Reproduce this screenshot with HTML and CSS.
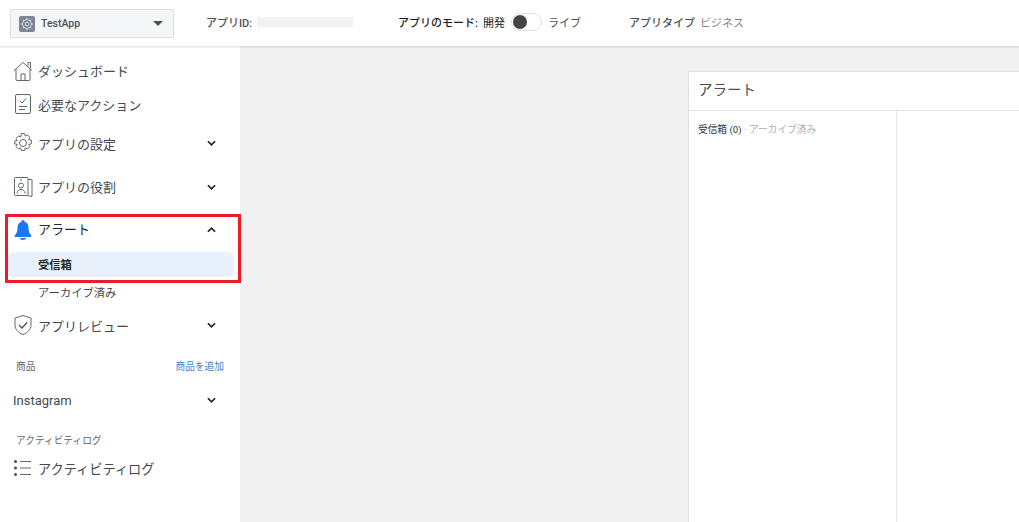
FILE: index.html
```html
<!DOCTYPE html>
<html lang="ja">
<head>
  <meta charset="UTF-8">
  <title>TestApp</title>
  <link rel="stylesheet" href="styles.css">
</head>
<body>
  <!-- Top bar -->
  <header class="topbar">
    <div class="app-select">
      <span class="app-icon">
        <svg viewBox="0 0 16 16" width="14" height="14" fill="none" stroke="#d5d8de" stroke-width="1.100"><circle cx="8" cy="8" r="2.200"/><circle cx="8" cy="8" r="5"/><path d="M8 1v2M8 13v2M1 8h2M13 8h2M3 3l1.500 1.500M11.500 11.500L13 13M13 3l-1.500 1.500M4.500 11.500L3 13"/></svg>
      </span>
      <span class="app-name">TestApp</span>
      <span class="caret"></span>
    </div>
    <div class="app-id"><b>アプリID:</b><span class="id-mask"></span></div>
    <div class="app-mode">
      <b>アプリのモード:</b><span class="mode-value">開発</span>
      <span class="toggle"><span class="knob"></span></span>
      <span class="live">ライブ</span>
    </div>
    <div class="app-type"><b>アプリタイプ</b><span class="type-value">ビジネス</span></div>
  </header>

  <div class="main">
    <!-- Sidebar -->
    <nav class="sidebar">
      <a class="nav-item h33">
        <svg class="nav-icon" viewBox="0 0 20 20" fill="none" stroke="#606770"><path d="M.5 10L10 1.500l9 8M3 8v10.500a1 1 0 0 0 1 1h12a1 1 0 0 0 1-1V8M8 19.500v-6.500h4v6.500M15 5V1.500h2.500V7.500"/></svg>
        ダッシュボード
      </a>
      <a class="nav-item h34">
        <svg class="nav-icon" viewBox="0 0 20 20" fill="none" stroke="#606770"><rect x="2.500" y=".5" width="15" height="19" rx="1.500"/><path d="M7 7l2 2 4-4.500M6 12.500h8M6 15.500h6"/></svg>
        必要なアクション
      </a>
      <a class="nav-item h44">
        <svg class="nav-icon" viewBox="0 0 20 20" fill="none" stroke="#606770"><circle cx="10" cy="10" r="3.500"/><path d="M8.300.5h3.400l.5 2.600 2.300-1.200 2.400 2.400-1.200 2.300 2.600.5v3.800l-2.600.5 1.200 2.300-2.400 2.400-2.300-1.200-.5 2.600H8.300l-.5-2.600-2.300 1.200-2.400-2.400 1.200-2.300-2.600-.5V8.100l2.600-.5-1.200-2.300 2.400-2.400 2.300 1.200z"/></svg>
        アプリの設定
        <svg class="chev" viewBox="0 0 10 6"><path d="M1 1l4 4 4-4"/></svg>
      </a>
      <a class="nav-item h43">
        <svg class="nav-icon" viewBox="0 0 20 20" fill="none" stroke="#606770"><path d="M15 2.500h4V19.500l-4.500-1"/><rect x="1.500" y=".5" width="13.500" height="18" rx="1"/><circle cx="8" cy="8.500" r="2.500"/><path d="M4 16.500c0-3 2-4 4-4s4 1 4 4M7 3h2"/></svg>
        アプリの役割
        <svg class="chev" viewBox="0 0 10 6"><path d="M1 1l4 4 4-4"/></svg>
      </a>
      <a class="nav-item open">
        <svg class="nav-icon bell" viewBox="0 0 20 20" fill="#1877f2"><path d="M10 0c1 0 1.600.8 1.600 1.700C14.500 2.500 15.500 5 15.500 8c0 3.500 1 5.500 2.500 7 .5.500.5 2-.5 2h-15c-1 0-1-1.500-.5-2 1.500-1.500 2.500-3.500 2.500-7 0-3 1-5.500 3.900-6.300C8.400.8 9 0 10 0zM7 18h6c0 1-1.300 2-3 2s-3-1-3-2z"/></svg>
        アラート
        <svg class="chev" viewBox="0 0 10 6"><path d="M1 5l4-4 4 4"/></svg>
      </a>
      <a class="sub-item active">受信箱</a>
      <a class="sub-item">アーカイブ済み</a>
      <a class="nav-item raised">
        <svg class="nav-icon" viewBox="0 0 20 20" fill="none" stroke="#606770"><path d="M10 .5l8 2.500V10c0 4.500-3.500 8-8 9.500C5.500 18 2 14.500 2 10V3z"/><path d="M6 10l3 3 5-5.500" stroke-width="1.300" stroke="#4b4f56"/></svg>
        アプリレビュー
        <svg class="chev" viewBox="0 0 10 6"><path d="M1 1l4 4 4-4"/></svg>
      </a>
      <div class="nav-heading h40">
        <span>商品</span>
        <a class="add-link">商品を追加</a>
      </div>
      <a class="nav-item h28">
        Instagram
        <svg class="chev" viewBox="0 0 10 6"><path d="M1 1l4 4 4-4"/></svg>
      </a>
      <div class="nav-heading h52"><span>アクティビティログ</span></div>
      <a class="nav-item h4">
        <svg class="nav-icon" viewBox="0 0 20 20" fill="none" stroke="#606770"><path d="M7 3.500h11M7 10h11M7 16.500h11"/><path d="M2.500 3.500h.01M2.500 10h.01M2.500 16.500h.01" stroke="#4b4f56" stroke-width="3" stroke-linecap="round"/></svg>
        <span class="log-label">アクティビティログ</span>
      </a>
    </nav>

    <!-- Content -->
    <main class="content">
      <section class="panel">
        <h2 class="panel-title">アラート</h2>
        <div class="panel-body">
          <div class="panel-list">
            <span class="inbox">受信箱 (0)</span> <span class="sep">·</span> <span class="archived">アーカイブ済み</span>
          </div>
          <div class="panel-detail"></div>
        </div>
      </section>
    </main>
  </div>

  <!-- Annotation box on the screenshot -->
  <div class="highlight"></div>
</body>
</html>
```

FILE: styles.css
```css
html, body { height: 100%; }
body { margin: 0; overflow: hidden; background-color: #f1f1f1; color: #444950; font-family: Roboto, "Noto Sans CJK JP", sans-serif; font-size: 11px; }
b { font-weight: 500; }
a { display: block; }

.topbar { position: relative; z-index: 1; display: flex; align-items: center; height: 46px; padding-bottom: 2px; background-color: #fff; box-shadow: 0 1px 2px rgba(0, 0, 0, 0.15); color: #4b4f56; box-sizing: border-box; }
.app-select { display: flex; align-items: center; width: 164px; height: 29px; margin: 3px 0 0 10px; padding: 0 9px 0 8px; box-sizing: border-box; background-color: #f5f6f7; border: 1px solid #dddfe2; border-radius: 2px; }
.app-icon { display: flex; align-items: center; justify-content: center; width: 16px; height: 16px; background-color: #7d8699; border-radius: 2px; }
.app-name { flex: 1; margin-left: 6px; font-size: 10.500px; font-weight: 500; color: #4b4f56; }
.caret { width: 0; height: 0; margin-right: 1px; border-left: 5px solid transparent; border-right: 5px solid transparent; border-top: 5px solid #4b4f56; }
.app-id { display: flex; align-items: center; width: 192px; margin-left: 32px; }
.id-mask { width: 96px; height: 10px; margin-left: 5px; background-color: #f2f2f2; }
.app-mode { display: flex; align-items: center; width: 231px; color: #1c1e21; }
.mode-value { margin-left: 5px; }
.toggle { display: inline-block; width: 31px; height: 18px; margin: 0 6px; border: 1px solid #dddfe2; border-radius: 10px; box-sizing: border-box; }
.knob { display: block; width: 14px; height: 14px; margin: 1px 0 0 1px; background-color: #444; border-radius: 50%; }
.live { color: #4b4f56; }
.type-value { margin-left: 5px; color: #7f7f7f; }

.main { display: flex; height: 476px; }
.sidebar { flex: none; width: 240px; padding-top: 8px; box-sizing: border-box; background-color: #fff; }
.nav-item { display: flex; align-items: center; padding-left: 13px; color: #444950; font-size: 13px; }
.nav-icon { flex: none; width: 20px; height: 20px; margin-right: 5px; }
.bell { margin-top: 4px; }
.chev { width: 9px; height: 6px; margin-left: auto; margin-right: 24px; fill: none; stroke: #1c1e21; stroke-width: 1.800; }
.open { height: 40px; padding-bottom: 2px; color: #1c2b33; }
.open .chev { margin-top: 4px; }
.raised { height: 38px; padding-bottom: 2px; }
.log-label { font-size: 13.200px; }
.h33 { height: 33px; }
.h34 { height: 34px; }
.h44 { height: 44px; }
.h43 { height: 43px; }
.h40 { height: 40px; }
.h28 { height: 28px; }
.h52 { height: 52px; }
.h4 { height: 4px; }
.sub-item { height: 25px; line-height: 27px; margin: 0 6px 1px 8px; padding-left: 30px; border-radius: 6px; font-size: 11.300px; color: #444950; }
.sub-item + .sub-item { height: 28px; line-height: 31px; margin-bottom: 0; }
.active { margin-top: 2px; background-color: #e7f0fb; font-weight: 700; color: #1c2b33; }
.nav-heading { display: flex; align-items: center; justify-content: space-between; padding: 0 16px; font-size: 9.700px; color: #606770; box-sizing: border-box; }
.add-link { color: #4080d0; }

.content { flex: 1; min-width: 0; padding: 25px 0 0 448px; height: 100%; box-sizing: border-box; }
.panel { display: flex; flex-direction: column; height: 100%; box-sizing: border-box; background-color: #fff; border: 1px solid #dddfe2; border-right: 0; border-bottom: 0; }
.panel-title { height: 39px; margin: 0; padding-left: 9px; line-height: 37px; font-size: 14.500px; font-weight: 400; color: #4b4f56; border-bottom: 1px solid #e5e5e5; box-sizing: border-box; }
.panel-body { display: flex; flex: 1; }
.panel-list { width: 208px; padding: 11px 0 0 9px; box-sizing: border-box; border-right: 1px solid #e5e5e5; font-size: 9.700px; color: #4b4f56; }
.inbox { color: #333; }
.sep, .archived { color: #a9adb3; }

.highlight { position: absolute; left: 5px; top: 214px; width: 236px; height: 69px; box-sizing: border-box; border: 3px solid #ed1c24; }
```
